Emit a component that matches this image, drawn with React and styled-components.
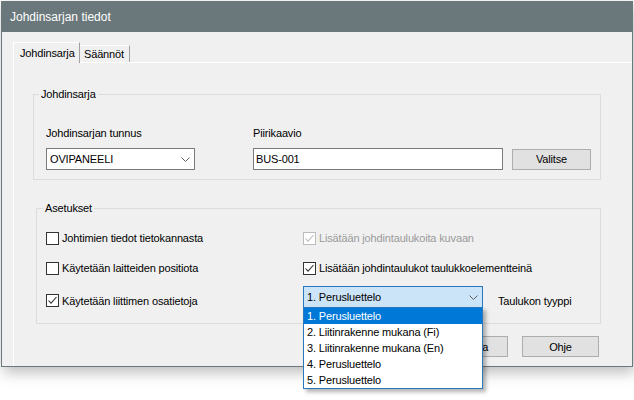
import React from "react"
import styled, { createGlobalStyle } from "styled-components"

const GlobalStyle = createGlobalStyle`
  html, body {
    margin: 0;
    padding: 0;
    background: #ffffff;
  }
  body {
    font-family: "Liberation Sans", Arial, sans-serif;
    font-size: 11px;
    letter-spacing: -0.15px;
    color: #000;
  }
  * {
    box-sizing: border-box;
  }
`

const Chevron = ({ color = "#606060" }) => (
  <svg width="9" height="5" viewBox="0 0 9 5">
    <polyline points="0.5,0.5 4.5,4.5 8.5,0.5" fill="none" stroke={color} strokeWidth="1" />
  </svg>
)

const Check = ({ color }) => (
  <svg width="11" height="11" viewBox="0 0 11 11">
    <polyline points="1.5,5.5 4,8.2 9.5,2" fill="none" stroke={color} strokeWidth="1.1" />
  </svg>
)

const CheckBox = ({ checked, disabled, children }) => (
  <CheckRow $disabled={disabled}>
    <Box $disabled={disabled}>
      {checked && <Check color={disabled ? "#bcbcbc" : "#333"} />}
    </Box>
    <span>{children}</span>
  </CheckRow>
)

const App = () => {
  const options = [
    "1. Perusluettelo",
    "2. Liitinrakenne mukana (Fi)",
    "3. Liitinrakenne mukana (En)",
    "4. Perusluettelo",
    "5. Perusluettelo",
  ]

  return (
    <Stage>
      <GlobalStyle />
      <Window>
        <TitleBar>Johdinsarjan tiedot</TitleBar>
        <WindowBody>
          <TabStrip>
            <Tab $active>Johdinsarja</Tab>
            <Tab>Säännöt</Tab>
          </TabStrip>
          <TabPanel>
            <Group $width={568}>
              <Legend $offset={5}>Johdinsarja</Legend>
              <SeriesRow>
                <Field $width={149}>
                  <Label>Johdinsarjan tunnus</Label>
                  <Combo $width={149}>
                    <span>OVIPANEELI</span>
                    <Chevron />
                  </Combo>
                </Field>
                <Field>
                  <Label>Piirikaavio</Label>
                  <InputRow>
                    <TextInput>BUS-001</TextInput>
                    <Button $width={79}>Valitse</Button>
                  </InputRow>
                </Field>
              </SeriesRow>
            </Group>

            <Group $width={565} $top={21} $left={3}>
              <Legend $offset={6}>Asetukset</Legend>
              <SettingsGrid>
                <CheckBox>Johtimien tiedot tietokannasta</CheckBox>
                <CheckBox checked disabled>Lisätään johdintaulukoita kuvaan</CheckBox>
                <CheckBox>Käytetään laitteiden positiota</CheckBox>
                <CheckBox checked>Lisätään johdintaulukot taulukkoelementteinä</CheckBox>
                <CheckBox checked>Käytetään liittimen osatietoja</CheckBox>
                <TypeRow>
                  <Combo $width={180} $open>
                    <span>1. Perusluettelo</span>
                    <Chevron />
                    <DropList>
                      {options.map((o, i) => (
                        <Option key={i} $selected={i === 0}>{o}</Option>
                      ))}
                    </DropList>
                  </Combo>
                  <TypeLabel>Taulukon tyyppi</TypeLabel>
                </TypeRow>
              </SettingsGrid>
            </Group>

            <ButtonRow>
              <Button $width={77}>OK</Button>
              <Button $width={77}>Peruuta</Button>
              <Button $width={77}>Ohje</Button>
            </ButtonRow>
          </TabPanel>
        </WindowBody>
      </Window>
    </Stage>
  )
}

const Stage = styled.div`
  width: 634px;
  height: 400px;
  padding: 1px 0 0 1px;
  background: #ffffff;
  overflow: hidden;
`

const Window = styled.div`
  width: 632px;
  height: 366px;
  border: 1px solid #6b797c;
  background: #f0f0f0;
  box-shadow: 2px 5px 14px rgba(0, 0, 0, 0.28);
  display: flex;
  flex-direction: column;
`

const TitleBar = styled.div`
  height: 30px;
  flex: none;
  background: #6a787b;
  color: #ffffff;
  font-size: 12px;
  letter-spacing: 0;
  display: flex;
  align-items: center;
  padding-left: 8px;
`

const WindowBody = styled.div`
  flex: 1;
  display: flex;
  flex-direction: column;
  padding: 10px 0 0 11px;
`

const TabStrip = styled.div`
  display: flex;
  align-items: flex-end;
  height: 21px;
  margin-bottom: -1px;
  position: relative;
  z-index: 1;
`

const Tab = styled.div`
  width: ${(p) => (p.$active ? "67px" : "50px")};
  height: ${(p) => (p.$active ? "21px" : "17px")};
  margin-bottom: ${(p) => (p.$active ? "0" : "1px")};
  padding: ${(p) => (p.$active ? "3px 0 0 6px" : "1px 0 0 4px")};
  line-height: 14px;
  background: #f0f0f0;
  border-top: 1px solid #ffffff;
  border-left: ${(p) => (p.$active ? "1px solid #ffffff" : "none")};
  border-right: 1px solid #a0a0a0;
  white-space: nowrap;
`

const TabPanel = styled.div`
  flex: 1;
  border-top: 1px solid #ffffff;
  border-left: 1px solid #ffffff;
  padding: 24px 0 0 19px;
`

const Group = styled.fieldset`
  margin: ${(p) => `${p.$top || 0}px 0 0 ${p.$left || 0}px`};
  padding: 0;
  width: ${(p) => p.$width}px;
  min-width: 0;
  border: 1px solid #dcdcdc;
`

const Legend = styled.legend`
  margin-left: ${(p) => p.$offset}px;
  padding: 0 2px;
  line-height: 14px;
  font-size: 11px;
`

const SeriesRow = styled.div`
  display: flex;
  gap: 58px;
  padding: 25px 12px 9px;
`

const Field = styled.div`
  display: flex;
  flex-direction: column;
  gap: 7px;
  width: ${(p) => (p.$width ? `${p.$width}px` : "auto")};
`

const Label = styled.div`
  line-height: 15px;
  white-space: nowrap;
`

const Combo = styled.div`
  position: relative;
  width: ${(p) => p.$width}px;
  height: 22px;
  margin-top: ${(p) => (p.$open ? "3px" : "0")};
  border: 1px solid ${(p) => (p.$open ? "#2a77c0" : "#7a7a7a")};
  background: ${(p) => (p.$open ? "#cce4f7" : "#ffffff")};
  display: flex;
  align-items: center;
  justify-content: space-between;
  padding: 0 4px 0 3px;
  white-space: nowrap;
`

const DropList = styled.div`
  position: absolute;
  top: 20px;
  left: -1px;
  width: calc(100% + 2px);
  background: #ffffff;
  border: 1px solid #2a77c0;
  box-shadow: 3px 3px 4px rgba(0, 0, 0, 0.3);
  z-index: 10;
`

const Option = styled.div`
  height: 16px;
  line-height: 16px;
  padding-left: 3px;
  background: ${(p) => (p.$selected ? "#0078d7" : "transparent")};
  color: ${(p) => (p.$selected ? "#ffffff" : "#000")};
  white-space: nowrap;
`

const InputRow = styled.div`
  display: flex;
  align-items: center;
  gap: 9px;
`

const TextInput = styled.div`
  width: 250px;
  height: 22px;
  border: 1px solid #7a7a7a;
  background: #ffffff;
  padding-left: 2px;
  display: flex;
  align-items: center;
`

const Button = styled.div`
  width: ${(p) => p.$width}px;
  height: 21px;
  border: 1px solid #adadad;
  background: #e1e1e1;
  display: flex;
  align-items: center;
  justify-content: center;
`

const SettingsGrid = styled.div`
  display: grid;
  grid-template-columns: 257px 1fr;
  grid-template-rows: 30px 30px 35px;
  align-items: center;
  padding: 8px 9px 5px;
`

const CheckRow = styled.div`
  display: flex;
  align-items: center;
  gap: 3px;
  white-space: nowrap;
  color: ${(p) => (p.$disabled ? "#9a9a9a" : "#000")};
`

const Box = styled.span`
  width: 13px;
  height: 13px;
  flex: none;
  border: 1px solid ${(p) => (p.$disabled ? "#bcbcbc" : "#333333")};
  background: #ffffff;
  display: flex;
  align-items: center;
  justify-content: center;
`

const TypeRow = styled.div`
  display: flex;
  align-items: flex-start;
  align-self: stretch;
`

const TypeLabel = styled.div`
  align-self: center;
  margin-left: 15px;
  white-space: nowrap;
`

const ButtonRow = styled.div`
  width: 568px;
  display: flex;
  justify-content: flex-end;
  gap: 14px;
  padding-right: 2px;
  margin-top: 12px;
`

export default App
